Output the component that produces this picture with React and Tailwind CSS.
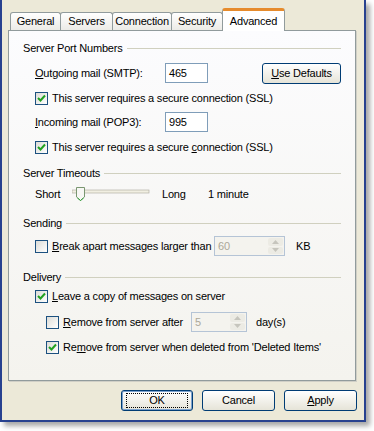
import React from 'react'

const font = { fontFamily: '"Liberation Sans", Arial, sans-serif' }

function Check({ checked }) {
  return (
    <span className="w-[13px] h-[13px] border border-[#1c5180] bg-gradient-to-br from-[#dcdcd7] to-white flex items-center justify-center shrink-0">
      {checked && (
        <svg width="9" height="9" viewBox="0 0 9 9">
          <path d="M1 4 L3.5 6.5 L8 1.5" fill="none" stroke="#21a121" strokeWidth="2" />
        </svg>
      )}
    </span>
  )
}

function U({ children }) {
  return <span className="underline underline-offset-1">{children}</span>
}

function Header({ title, mt }) {
  return (
    <div className={`flex items-center h-[16px] pl-[14px] pr-[14px] ${mt}`}>
      <span className="text-black">{title}</span>
      <div className="flex-1 h-px bg-[#d0d0bf] ml-[4px]" />
    </div>
  )
}

function Spin({ value, w }) {
  return (
    <div className={`h-[20px] ${w} border border-[#b5c4d6] bg-[#f4f3ee] flex items-center justify-between pl-[3px] pr-[1px] shrink-0`}>
      <span className="text-[#aca899]">{value}</span>
      <div className="flex flex-col w-[15px] h-[16px] gap-px">
        <div className="flex-1 bg-[#ecebe4] rounded-[2px] flex items-center justify-center">
          <svg width="7" height="4" viewBox="0 0 7 4"><path d="M0 4 L3.5 0 L7 4Z" fill="#c6c5bd" /></svg>
        </div>
        <div className="flex-1 bg-[#ecebe4] rounded-[2px] flex items-center justify-center">
          <svg width="7" height="4" viewBox="0 0 7 4"><path d="M0 0 L3.5 4 L7 0Z" fill="#c6c5bd" /></svg>
        </div>
      </div>
    </div>
  )
}

function Button({ children, w, focus }) {
  return (
    <div className={`${w} h-[21px] border border-[#003c74] rounded-[3px] bg-gradient-to-b from-white to-[#e6e4d8] flex items-center justify-center ${focus ? 'shadow-[inset_0_0_0_1px_#7da2ce]' : ''}`}>
      <span className={focus ? 'outline outline-1 outline-dotted outline-black px-[22px] leading-[13px]' : ''}>{children}</span>
    </div>
  )
}

function Tab({ label, w, active }) {
  if (active) {
    return (
      <div className={`h-[23px] ${w} -mb-px z-10 bg-white border-x border-[#919b9c] rounded-t-[3px] relative flex items-center justify-center border-t-[3px] border-t-[#e68b2c]`}>
        {label}
      </div>
    )
  }
  return (
    <div className={`h-[18px] ${w} border border-b-0 border-[#919b9c] rounded-t-[3px] bg-gradient-to-b from-white to-[#ecebe6] flex items-center justify-center -mr-px`}>
      {label}
    </div>
  )
}

export default function App() {
  return (
    <div className="w-[374px] h-[431px] bg-white text-[11px] tracking-[-0.2px] text-black whitespace-nowrap" style={font}>
      <div className="w-[366px] h-[422px] bg-[#ece9d8] border-x-2 border-b-2 border-[#27418f] shadow-[4px_4px_5px_rgba(0,0,0,0.35)] flex flex-col">
        <div className="ml-[6px] mt-[8px] w-[348px]">
          <div className="flex items-end h-[22px] pl-[2px]">
            <Tab label="General" w="w-[51px]" />
            <Tab label="Servers" w="w-[53px]" />
            <Tab label="Connection" w="w-[60px]" />
            <Tab label="Security" w="w-[52px]" />
            <Tab label="Advanced" w="w-[63px]" active />
          </div>
          <div className="h-[351px] border border-[#919b9c] bg-gradient-to-b from-[#fcfcfe] to-[#f4f3ee] flex flex-col shadow-[1px_1px_0_#d0cfc6]">
            <Header title="Server Port Numbers" mt="mt-[9px]" />
            <div className="flex items-center h-[20px] mt-[7px] pl-[26px]">
              <span className="w-[130px]"><U>O</U>utgoing mail (SMTP):</span>
              <div className="w-[43px] h-[20px] border border-[#7f9db9] bg-white flex items-center pl-[3px]">465</div>
              <div className="ml-[54px]">
                <Button w="w-[79px]"><U>U</U>se Defaults</Button>
              </div>
            </div>
            <div className="flex items-center h-[16px] mt-[7px] pl-[26px] gap-[4px]">
              <Check checked />
              <span>This server requires a secure connection (SSL)</span>
            </div>
            <div className="flex items-center h-[20px] mt-[6px] pl-[26px]">
              <span className="w-[130px]"><U>I</U>ncoming mail (POP3):</span>
              <div className="w-[43px] h-[20px] border border-[#7f9db9] bg-white flex items-center pl-[3px]">995</div>
            </div>
            <div className="flex items-center h-[16px] mt-[7px] pl-[26px] gap-[4px]">
              <Check checked />
              <span>This server requires a secure <U>c</U>onnection (SSL)</span>
            </div>
            <Header title="Server Timeouts" mt="mt-[10px]" />
            <div className="flex items-center h-[20px] mt-[3px] pl-[26px]">
              <span className="w-[37px]">Short</span>
              <svg width="78" height="16" viewBox="0 0 78 16">
                <rect x="0" y="4" width="77" height="3" fill="#f1efe2" stroke="#a9a69b" strokeWidth="0.6" />
                <path d="M4.5 1.5 H12.5 V11 L8.5 14.5 L4.5 11 Z" fill="#f7f7f4" stroke="#7a9671" strokeWidth="1" />
                <path d="M5.5 12 L8.5 14.5 L11.5 12" fill="none" stroke="#2fa338" strokeWidth="1" />
              </svg>
              <span className="ml-[12px] w-[46px]">Long</span>
              <span>1 minute</span>
            </div>
            <Header title="Sending" mt="mt-[11px]" />
            <div className="flex items-center h-[20px] mt-[5px] pl-[26px] gap-[4px]">
              <Check />
              <span className="w-[158px]"><U>B</U>reak apart messages larger than</span>
              <Spin value="60" w="w-[71px]" />
              <span className="ml-[7px]">KB</span>
            </div>
            <Header title="Delivery" mt="mt-[13px]" />
            <div className="flex items-center h-[16px] mt-[3px] pl-[26px] gap-[4px]">
              <Check checked />
              <span><U>L</U>eave a copy of messages on server</span>
            </div>
            <div className="flex items-center h-[20px] mt-[8px] pl-[37px] gap-[4px]">
              <Check />
              <span className="w-[124px]"><U>R</U>emove from server after</span>
              <Spin value="5" w="w-[56px]" />
              <span className="ml-[5px]">day(s)</span>
            </div>
            <div className="flex items-center h-[16px] mt-[7px] pl-[37px] gap-[4px]">
              <Check checked />
              <span>Re<U>m</U>ove from server when deleted from 'Deleted Items'</span>
            </div>
          </div>
        </div>
        <div className="flex justify-end gap-[9px] mt-[9px] pr-[7px]">
          <Button w="w-[72px]" focus>OK</Button>
          <Button w="w-[73px]">Cancel</Button>
          <Button w="w-[73px]"><U>A</U>pply</Button>
        </div>
      </div>
    </div>
  )
}
